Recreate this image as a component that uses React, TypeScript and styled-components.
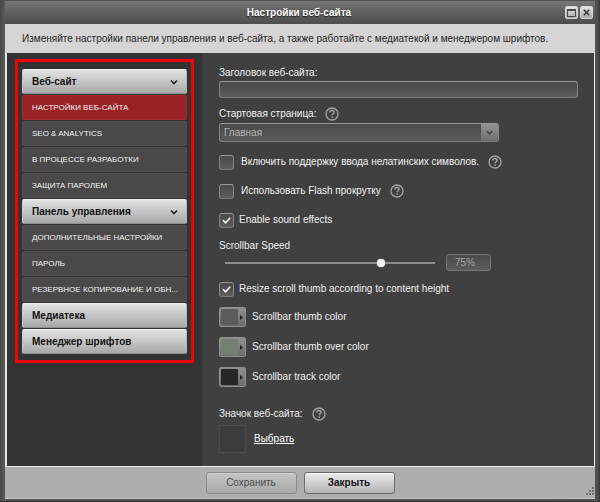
import React, { useState } from 'react';
import styled, { createGlobalStyle, css } from 'styled-components';

const Global = createGlobalStyle`
  * { box-sizing: border-box; }
  html, body { margin: 0; background: #4a4b48; }
  body, button, input, select {
    font-family: "Liberation Sans", Arial, sans-serif;
    font-size: 10px;
    line-height: 16px;
  }
  button, input { margin: 0; }
`;

const Window = styled.div`
  display: flex;
  flex-direction: column;
  min-height: 100vh;
  padding: 1px 5px 2px 5px;
  background: linear-gradient(90deg, #484945 0, #5a5b58 5px, #525252 6px, #505050 calc(100% - 3px), #383838 100%);
  border-bottom: 1px solid #363636;
`;

const TitleBar = styled.header`
  display: grid;
  grid-template-columns: 1fr auto 1fr;
  align-items: center;
  height: 23px;
  padding-right: 2px;
  background: linear-gradient(#777 0, #636363 40%, #4d4d4d 100%);
`;

const Title = styled.h1`
  grid-column: 2;
  margin: 0;
  font-size: 10px;
  line-height: 16px;
  color: #fff;
  text-shadow: 0 1px 1px #222;
`;

const WindowButtons = styled.div`
  display: flex;
  justify-content: flex-end;
  gap: 2px;
`;

const WindowButton = styled.button`
  display: grid;
  place-items: center;
  width: 13px;
  height: 13px;
  padding: 0;
  border: 1px solid #d8d8d8;
  border-radius: 2px;
  background: linear-gradient(#e4e4e4, #a9a9a9);
`;

const Intro = styled.p`
  margin: 0;
  padding: 7px 16px 6px 17px;
  line-height: 16px;
  color: #262626;
  background: #d6d4d5;
`;

const Body = styled.div`
  flex: 1;
  display: grid;
  grid-template-columns: 196px 1fr;
  border: solid #e6e6e6;
  border-width: 0 1px 0 2px;
  background: #404040;
`;

const Sidebar = styled.aside`
  padding: 6px 0 0 8px;
  border-right: 1px solid #3a3a3e;
  background: #333;
`;

const Nav = styled.nav`
  display: flex;
  flex-direction: column;
  gap: 1px;
  width: 179px;
  padding: 7px 4px 6px 4px;
  border: 3px solid #ec0505;
`;

const GroupButton = styled.button`
  display: flex;
  align-items: center;
  justify-content: space-between;
  height: 25px;
  padding: 0 8px 0 9px;
  border: 1px solid #c9c9c9;
  border-color: #efefef #b5b5b5 #909090 #c9c9c9;
  border-radius: 2px;
  background: linear-gradient(#e2e2e2, #a8a8a8);
  font-weight: 700;
  color: #111;
  text-align: left;
`;

const NavItem = styled.a<{ $active?: boolean }>`
  display: block;
  height: 25px;
  padding: 0 9px;
  border: 1px solid ${p => (p.$active ? '#a32b2f' : '#525051')};
  border-radius: 2px;
  background: ${p => (p.$active ? '#992226' : '#4a4849')};
  font-size: 8px;
  line-height: 23px;
  color: #f2f2f2;
  text-decoration: none;
  white-space: nowrap;
`;

const Form = styled.form`
  display: flex;
  flex-direction: column;
  align-items: flex-start;
  padding: 12px 16px 12px 16px;
  color: #f0f0f0;
`;

const LabelRow = styled.div<{ $top?: number }>`
  display: flex;
  align-items: center;
  gap: 9px;
  height: 16px;
  margin-top: ${p => p.$top ?? 0}px;
`;

const fieldSkin = css`
  border: 1px solid #8b8b8b;
  border-color: #999 #858585 #7a7a7a #858585;
  border-radius: 3px;
  background: linear-gradient(#4a4a4a, #5c5c5c);
`;

const TextField = styled.input`
  ${fieldSkin}
  width: 100%;
  height: 17px;
  padding: 0 5px;
  color: #ddd;
`;

const SelectWrap = styled.div`
  ${fieldSkin}
  display: grid;
  grid-template-columns: 1fr 17px;
  width: 280px;
  max-width: 100%;
  height: 19px;
  margin-top: 1px;
  overflow: hidden;
`;

const Select = styled.select`
  grid-area: 1 / 1 / 2 / 3;
  padding: 0 20px 0 4px;
  border: 0;
  appearance: none;
  background: transparent;
  line-height: 17px;
  color: #b4b4b4;
`;

const SelectArrow = styled.span`
  grid-area: 1 / 2;
  display: grid;
  place-items: center;
  background: linear-gradient(#929292, #6f6f6f);
  pointer-events: none;
`;

const HelpButton = styled.button`
  width: 14px;
  height: 14px;
  padding: 0;
  border: 0;
  background: none;
  svg { display: block; }
`;

const CheckRow = styled.div<{ $top: number }>`
  display: flex;
  align-items: center;
  gap: 9px;
  height: 16px;
  margin-top: ${p => p.$top}px;
`;

const CheckLabel = styled.label<{ $gap: number }>`
  display: flex;
  align-items: center;
  gap: ${p => p.$gap}px;
`;

const CheckFrame = styled.span`
  display: grid;
  place-items: center;
  svg { grid-area: 1 / 1; pointer-events: none; }
`;

const CheckInput = styled.input`
  ${fieldSkin}
  grid-area: 1 / 1;
  width: 15px;
  height: 15px;
  appearance: none;
  &:not(:checked) + svg { visibility: hidden; }
`;

const SliderRow = styled.div`
  display: flex;
  align-items: center;
  height: 17px;
  padding-left: 6px;
  gap: 11px;
`;

const Slider = styled.input`
  width: 210px;
  height: 9px;
  appearance: none;
  background: linear-gradient(#8c8c8c, #8c8c8c) center / 100% 2px no-repeat;
  &::-webkit-slider-thumb {
    appearance: none;
    width: 8px;
    height: 8px;
    border-radius: 50%;
    background: #f4f4f4;
    box-shadow: 0 0 1px #fff;
  }
`;

const SpeedField = styled.input`
  ${fieldSkin}
  width: 45px;
  height: 17px;
  padding: 0 8px;
  border-color: #777;
  color: #a6a6a6;
`;

const ColorRow = styled.div`
  display: flex;
  align-items: center;
  gap: 6px;
  height: 20px;
  margin-top: 10px;
`;

const SwatchButton = styled.button`
  display: grid;
  grid-template-columns: 1fr 7px;
  align-items: center;
  width: 27px;
  height: 20px;
  padding: 1px 0 1px 1px;
  border: 1px solid #8e8e8e;
  border-radius: 2px;
  background: linear-gradient(#8f8f8f, #6b6b6b);
`;

const Swatch = styled.span<{ $color: string }>`
  height: 16px;
  border-radius: 1px;
  background: ${p => p.$color};
`;

const ArrowMark = styled.svg`
  justify-self: center;
`;

const IconRow = styled.div`
  display: flex;
  align-items: center;
  gap: 8px;
  margin-top: 3px;
`;

const IconPreview = styled.div`
  width: 27px;
  height: 28px;
  border: 1px solid #4b4b4b;
  background: #3d3d3d;
`;

const PickLink = styled.a`
  color: #fff;
`;

const Footer = styled.footer`
  position: relative;
  display: flex;
  justify-content: center;
  gap: 7px;
  padding: 5px 0 4px 0;
  border-top: 1px solid #efefef;
  border-bottom: 1px solid #c4c4c4;
  background: #aeaeae;
`;

const FooterButton = styled.button<{ $primary?: boolean }>`
  width: 91px;
  height: 22px;
  padding: 0;
  border: 1px solid ${p => (p.$primary ? '#6b6b6b' : '#8c8c8c')};
  border-radius: 3px;
  background: ${p => (p.$primary ? 'linear-gradient(#ececec, #b4b4b4)' : 'linear-gradient(#c4c4c4, #a9a9a9)')};
  box-shadow: inset 0 1px 0 ${p => (p.$primary ? '#fff' : '#cfcfcf')};
  font-weight: ${p => (p.$primary ? 700 : 400)};
  color: ${p => (p.$primary ? '#161616' : '#4a4a4a')};
`;

const Grip = styled.svg`
  position: absolute;
  right: 1px;
  bottom: 3px;
`;

const Chevron = ({ color = '#222', size = 8 }: { color?: string; size?: number }) => (
  <svg width={size} height={size} viewBox="0 0 8 8" fill="none" stroke={color} strokeWidth="1.6" aria-hidden="true">
    <path d="M1 2.5 4 5.5 7 2.5" />
  </svg>
);

const Help = ({ about }: { about: string }) => (
  <HelpButton type="button" aria-label={about}>
    <svg width="14" height="14" viewBox="0 0 14 14" fill="none" stroke="#a3a3a3" aria-hidden="true">
      <circle cx="7" cy="7" r="6" strokeWidth="1.3" />
      <path d="M4.9 5.5C4.9 4.2 5.8 3.5 7 3.5s2.1.7 2.1 1.8C9.1 6.6 7.2 6.7 7.2 8.3" strokeWidth="1.4" />
      <path d="M7.2 9.3V10.8" strokeWidth="1.5" />
    </svg>
  </HelpButton>
);

interface CheckProps { id: string; text: string; top: number; gap: number; initial?: boolean; help?: boolean }

const Check = ({ id, text, top, gap, initial = false, help }: CheckProps) => (
  <CheckRow $top={top}>
    <CheckLabel $gap={gap} htmlFor={id}>
      <CheckFrame>
        <CheckInput id={id} type="checkbox" defaultChecked={initial} />
        <svg width="9" height="9" viewBox="0 0 9 9" fill="none" stroke="#fff" strokeWidth="1.5" aria-hidden="true">
          <path d="M1 4.2 3.6 6.8 8.2 1.8" />
        </svg>
      </CheckFrame>
      {text}
    </CheckLabel>
    {help && <Help about={text} />}
  </CheckRow>
);

const groups = [
  { name: 'Веб-сайт', items: ['НАСТРОЙКИ ВЕБ-САЙТА', 'SEO & ANALYTICS', 'В ПРОЦЕССЕ РАЗРАБОТКИ', 'ЗАЩИТА ПАРОЛЕМ'] },
  { name: 'Панель управления', items: ['ДОПОЛНИТЕЛЬНЫЕ НАСТРОЙКИ', 'ПАРОЛЬ', 'РЕЗЕРВНОЕ КОПИРОВАНИЕ И ОБН...'] },
  { name: 'Медиатека', items: [] },
  { name: 'Менеджер шрифтов', items: [] },
];

const colors = [
  { text: 'Scrollbar thumb color', color: '#5b5b5b' },
  { text: 'Scrollbar thumb over color', color: '#74806f' },
  { text: 'Scrollbar track color', color: '#2a2627' },
];

export default function App() {
  const [speed, setSpeed] = useState(75);
  return (
    <>
      <Global />
      <Window>
        <TitleBar>
          <Title>Настройки веб-сайта</Title>
          <WindowButtons>
            <WindowButton type="button" aria-label="Развернуть">
              <svg width="9" height="8" viewBox="0 0 9 8" fill="none" stroke="#4a4a4a" aria-hidden="true">
                <path d="M.5 1V7.5H8.5V1" />
                <path d="M0 1H9" strokeWidth="2" />
              </svg>
            </WindowButton>
            <WindowButton type="button" aria-label="Закрыть окно">
              <svg width="7" height="7" viewBox="0 0 7 7" stroke="#3c3c3c" strokeWidth="1.6" aria-hidden="true">
                <path d="M.8.8 6.2 6.2M6.2.8.8 6.2" />
              </svg>
            </WindowButton>
          </WindowButtons>
        </TitleBar>
        <Intro>
          Изменяйте настройки панели управления и веб-сайта, а также работайте с медиатекой и менеджером шрифтов.
        </Intro>
        <Body>
          <Sidebar>
            <Nav>
              {groups.map(group => (
                <React.Fragment key={group.name}>
                  <GroupButton type="button">
                    {group.name}
                    {group.items.length > 0 && <Chevron />}
                  </GroupButton>
                  {group.items.map((item, i) => (
                    <NavItem key={item} href="#" $active={group.name === 'Веб-сайт' && i === 0}>
                      {item}
                    </NavItem>
                  ))}
                </React.Fragment>
              ))}
            </Nav>
          </Sidebar>
          <Form onSubmit={e => e.preventDefault()}>
            <LabelRow>
              <label htmlFor="site-title">Заголовок веб-сайта:</label>
            </LabelRow>
            <TextField id="site-title" type="text" />
            <LabelRow $top={8}>
              <label htmlFor="start-page">Стартовая страница:</label>
              <Help about="Стартовая страница" />
            </LabelRow>
            <SelectWrap>
              <Select id="start-page">
                <option>Главная</option>
              </Select>
              <SelectArrow>
                <Chevron color="#404040" size={7} />
              </SelectArrow>
            </SelectWrap>
            <Check id="non-latin" text="Включить поддержку ввода нелатинских символов." top={12} gap={7} help />
            <Check id="flash-scroll" text="Использовать Flash прокрутку" top={13} gap={7} help />
            <Check id="sound" text="Enable sound effects" top={13} gap={5} initial />
            <LabelRow $top={10}>
              <label htmlFor="speed">Scrollbar Speed</label>
            </LabelRow>
            <SliderRow>
              <Slider id="speed" type="range" value={speed} onChange={e => setSpeed(Number(e.target.value))} />
              <SpeedField aria-label="Scrollbar Speed" readOnly value={`${speed}%`} />
            </SliderRow>
            <Check id="resize" text="Resize scroll thumb according to content height" top={10} gap={5} initial />
            {colors.map(c => (
              <ColorRow key={c.text}>
                <SwatchButton type="button" aria-label={c.text}>
                  <Swatch $color={c.color} />
                  <ArrowMark width="3" height="5" viewBox="0 0 3 5" fill="#222" aria-hidden="true">
                    <path d="M0 0 3 2.5 0 5Z" />
                  </ArrowMark>
                </SwatchButton>
                {c.text}
              </ColorRow>
            ))}
            <LabelRow $top={19}>
              Значок веб-сайта:
              <Help about="Значок веб-сайта" />
            </LabelRow>
            <IconRow>
              <IconPreview />
              <PickLink href="#">Выбрать</PickLink>
            </IconRow>
          </Form>
        </Body>
        <Footer>
          <FooterButton type="button">Сохранить</FooterButton>
          <FooterButton type="button" $primary>Закрыть</FooterButton>
          <Grip width="9" height="9" viewBox="0 0 9 9" fill="#6e6e6e" aria-hidden="true">
            <path d="M7 1h2v2H7zM4 4h2v2H4zM7 4h2v2H7zM1 7h2v2H1zM4 7h2v2H4zM7 7h2v2H7z" />
          </Grip>
        </Footer>
      </Window>
    </>
  );
}
